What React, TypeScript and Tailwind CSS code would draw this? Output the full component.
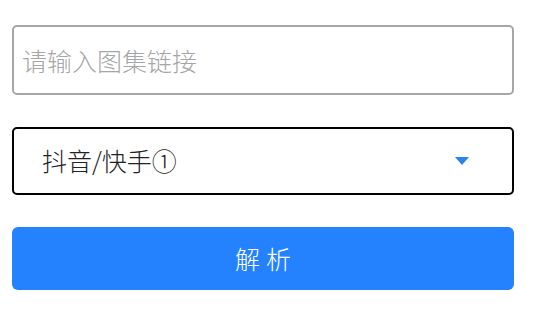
import { useState } from "react";

const App = () => {
  const [url, setUrl] = useState("");
  const [platform] = useState("抖音/快手①");

  return (
    <div className="w-[534px] h-[314px] bg-white pl-3 pr-5 pt-[25px] font-['Noto_Sans_CJK_SC','Noto_Sans',sans-serif]">
      <div className="flex flex-col gap-8">
        <input
          value={url}
          onChange={(e) => setUrl(e.target.value)}
          placeholder="请输入图集链接"
          className="h-[70px] w-full rounded-[5px] border-2 border-[#a6a6a6] px-2 font-['Noto_Sans_CJK_SC','Noto_Sans',sans-serif] text-[25px] font-light text-black outline-none placeholder:text-[#a6a6a6]"
        />

        <button
          type="button"
          className="flex h-[68px] w-full items-center justify-between rounded-[5px] border-2 border-black pl-7 pr-[43px] text-left font-['Noto_Sans_CJK_SC','Noto_Sans',sans-serif] text-[25px] font-light text-[#222]"
        >
          <span>{platform}</span>
          <svg width="14" height="8" viewBox="0 0 14 8">
            <path d="M0 0 L14 0 L7 8 Z" fill="#2a82f0" />
          </svg>
        </button>

        <button
          type="button"
          className="h-[63px] w-full rounded-[6px] bg-[#2582fe] pl-[6px] font-['Noto_Sans_CJK_SC','Noto_Sans',sans-serif] text-[25px] font-light tracking-[6px] text-white"
        >
          解析
        </button>
      </div>
    </div>
  );
};

export default App;
